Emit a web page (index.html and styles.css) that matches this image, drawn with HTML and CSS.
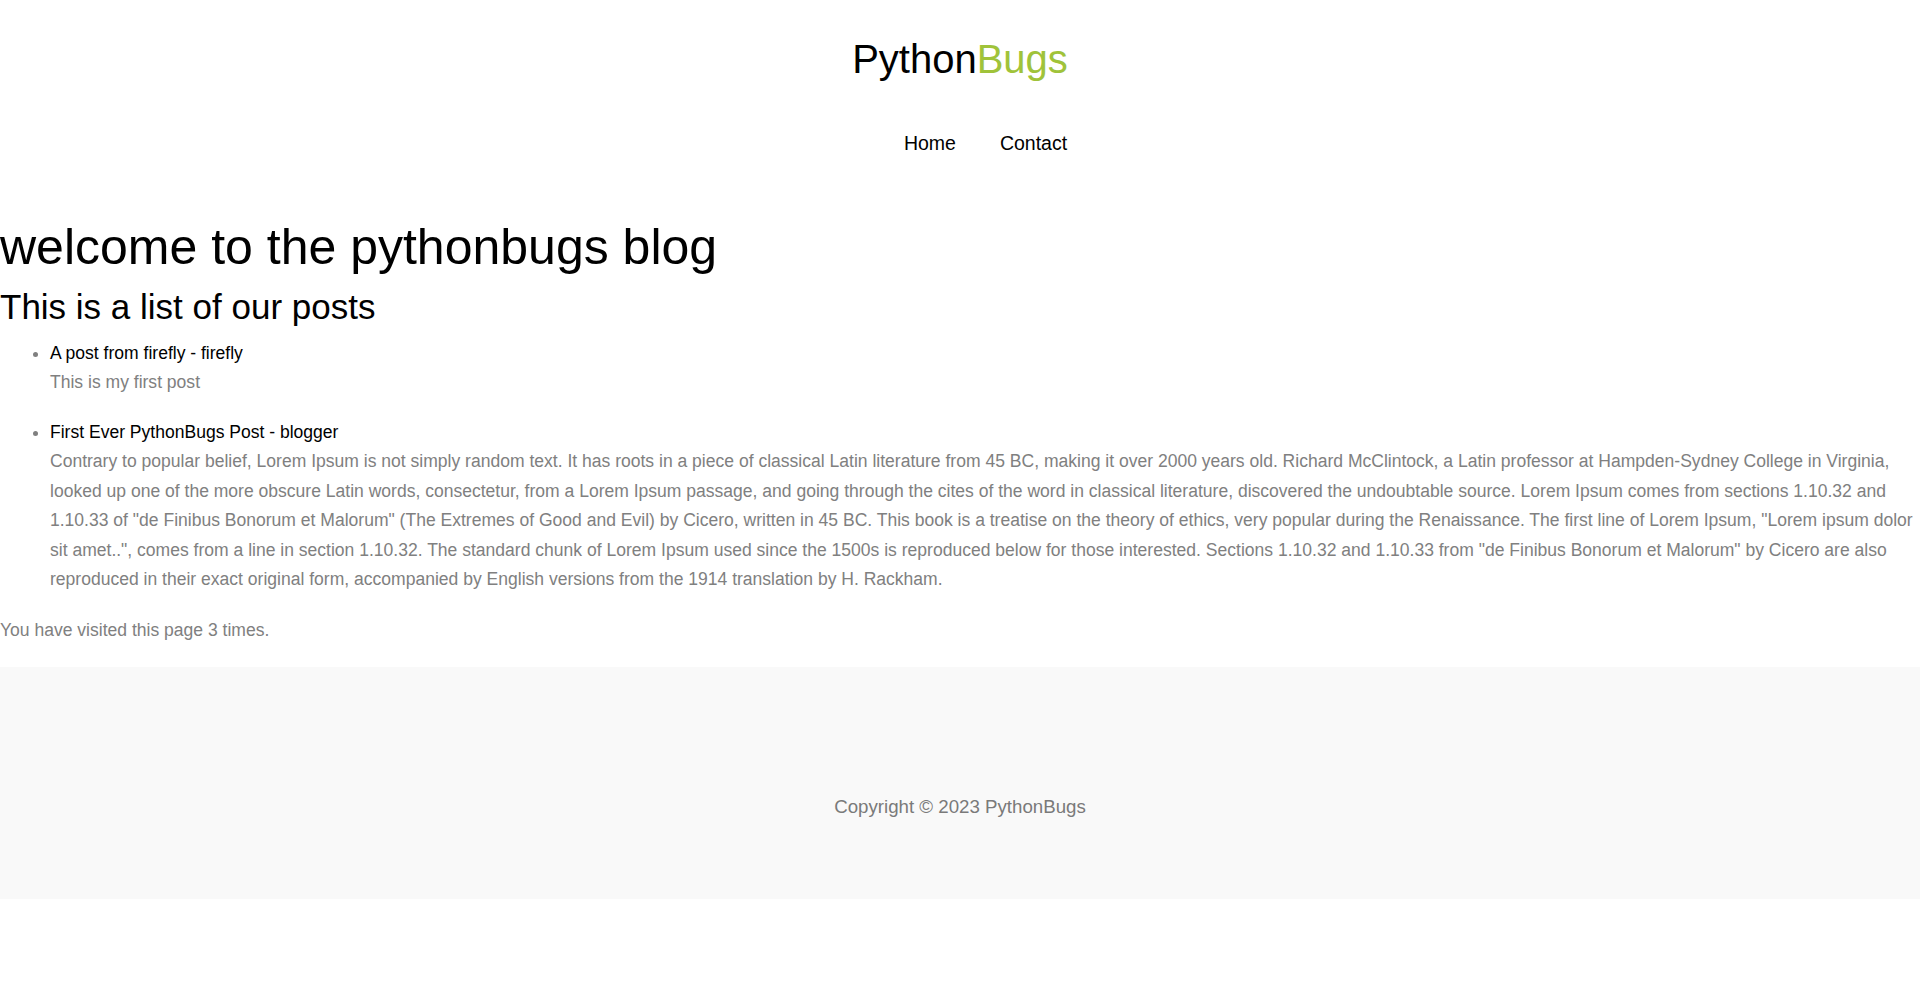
FILE: index.html
```html
<!DOCTYPE html>
<html lang="en">
<head>
<meta charset="utf-8">
<title>PythonBugs</title>
<link rel="stylesheet" href="styles.css">
</head>
<body>
<header class="site-header">
  <div class="logo"><span class="logo-dark">Python</span><span class="logo-green">Bugs</span></div>
  <nav class="nav">
    <a class="nav-link" href="#">Home</a>
    <a class="nav-link" href="#">Contact</a>
  </nav>
</header>
<main class="content">
  <h1 class="title">welcome to the pythonbugs blog</h1>
  <h2 class="subtitle">This is a list of our posts</h2>
  <ul class="posts">
    <li class="post">
      <a class="post-title" href="#">A post from firefly - firefly</a>
      <p class="post-body">This is my first post</p>
    </li>
    <li class="post">
      <a class="post-title" href="#">First Ever PythonBugs Post - blogger</a>
      <p class="post-body">Contrary to popular belief, Lorem Ipsum is not simply random text. It has roots in a piece of classical Latin literature from 45 BC, making it over 2000 years old. Richard McClintock, a Latin professor at Hampden-Sydney College in Virginia, looked up one of the more obscure Latin words, consectetur, from a Lorem Ipsum passage, and going through the cites of the word in classical literature, discovered the undoubtable source. Lorem Ipsum comes from sections 1.10.32 and 1.10.33 of "de Finibus Bonorum et Malorum" (The Extremes of Good and Evil) by Cicero, written in 45 BC. This book is a treatise on the theory of ethics, very popular during the Renaissance. The first line of Lorem Ipsum, "Lorem ipsum dolor sit amet..", comes from a line in section 1.10.32. The standard chunk of Lorem Ipsum used since the 1500s is reproduced below for those interested. Sections 1.10.32 and 1.10.33 from "de Finibus Bonorum et Malorum" by Cicero are also reproduced in their exact original form, accompanied by English versions from the 1914 translation by H. Rackham.</p>
    </li>
  </ul>
  <p class="visits">You have visited this page 3 times.</p>
</main>
<footer class="footer">
  <p class="copyright">Copyright © 2023 PythonBugs</p>
</footer>
</body>
</html>
```
FILE: styles.css
```css
html, body {
  margin: 0;
  padding: 0;
  background: #ffffff;
}
body {
  font-family: "Liberation Sans", Arial, sans-serif;
  font-size: 17.55px;
  line-height: 29.5px;
  color: #808080;
}
.site-header {
  display: flex;
  flex-direction: column;
  align-items: center;
  padding-top: 35px;
}
.logo {
  font-size: 40px;
  line-height: 48px;
}
.logo-dark { color: #000000; }
.logo-green { color: #a0c33a; }
.nav {
  display: flex;
  justify-content: center;
  gap: 44px;
  margin-top: 48px;
  padding-left: 51px;
  font-size: 19.5px;
  line-height: 24px;
}
.nav-link {
  color: #000000;
  text-decoration: none;
}
.content {
  padding-top: 62px;
}
.title {
  margin: 0;
  font-size: 50px;
  line-height: 60px;
  font-weight: normal;
  color: #000000;
}
.subtitle {
  margin: 9px 0 0;
  font-size: 35px;
  line-height: 42px;
  font-weight: normal;
  color: #000000;
}
.posts {
  margin: 10.5px 0 0;
  padding: 0 0 0 50px;
}
.post {
  margin-bottom: 20.3px;
}
.post:last-child {
  margin-bottom: 0;
}
.post-title {
  color: #000000;
  text-decoration: none;
}
.post-body {
  margin: 0;
}
.visits {
  margin: 21.5px 0 21.7px;
}
.footer {
  background: #f9f9f9;
  padding: 125px 0 77px;
  text-align: center;
}
.copyright {
  margin: 0;
  font-size: 18.7px;
  line-height: 29.5px;
  color: #7a7a7a;
}
```
